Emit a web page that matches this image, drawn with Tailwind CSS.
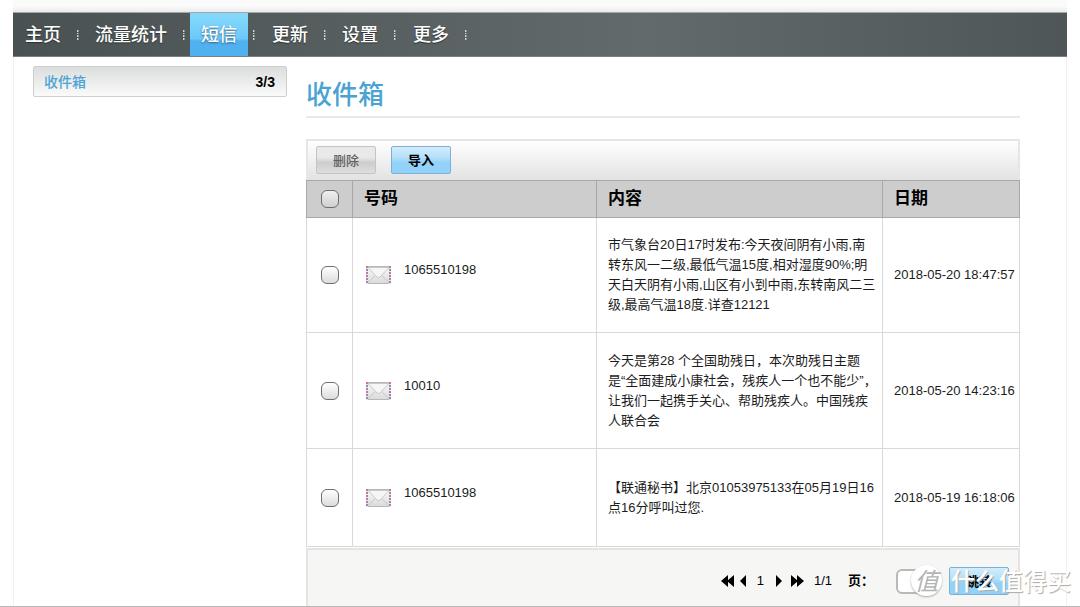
<!DOCTYPE html>
<html lang="zh-CN">
<head>
<meta charset="utf-8">
<meta name="viewport" content="width=device-width, initial-scale=1">
<title>收件箱</title>
<script src="https://cdn.jsdelivr.net/npm/@tailwindcss/browser@4"></script>
</head>
<body class="bg-white font-['Liberation_Sans','Noto_Sans_CJK_SC',sans-serif] text-[13px] leading-5 text-[#1c1c1c]">
<svg class="absolute size-0" aria-hidden="true">
  <defs>
    <linearGradient id="paper" x1="0" y1="0" x2="0" y2="1"><stop offset="0" stop-color="#fafafa"/><stop offset="1" stop-color="#dadada"/></linearGradient>
    <symbol id="mail" viewBox="0 0 25 18">
      <rect x="0.5" y="0.5" width="24" height="17" fill="url(#paper)" stroke="#b8b8b8"/>
      <path d="M2 16.5 9.5 9.500M23 16.5 15.5 9.500" stroke="#c8c8c8" fill="none"/>
      <path d="M2 1.500 11 11Q12.500 12.500 14 11L23 1.500Z" fill="#f6f6f6" stroke="#c8c8c8"/>
      <path d="M1 0V18M24 0V18" stroke="#ece6ee" stroke-width="2"/>
      <path d="M1 0V18M24 0V18" stroke="#d87477" stroke-width="2" stroke-dasharray="2 4"/>
      <path d="M1 3V18M24 3V18" stroke="#7f8fc8" stroke-width="2" stroke-dasharray="2 4"/>
    </symbol>
    <symbol id="dots" viewBox="0 0 2 10"><path d="M0 0h1v2H0zM0 3h1v1H0zM0 5h1v2H0zM0 8h1v2H0z" fill="#d0d4d4"/><path d="M1 0h1v2H1zM1 3h1v1H1zM1 5h1v2H1zM1 8h1v2H1z" fill="#8b9292"/></symbol>
  </defs>
</svg>
<div class="relative flex min-h-screen flex-col overflow-hidden border-b border-[#b8b8b8]">
  <div class="mx-[13px] flex flex-1 flex-col border-x border-[#f1f1f1]">
    <header class="-mx-px">
      <div class="h-3 bg-linear-to-b from-[#fbfbfb] from-50% to-[#ebebeb]"></div>
      <nav class="flex h-[45px] items-center border-y border-t-[#a4a8a8] border-b-[#7b8181] bg-linear-to-r from-[#495152] via-[#626a6b] via-60% to-[#4e5657] pl-px text-lg font-medium text-white text-shadow-[0_1px_1px_#2b3030]">
        <a href="#" class="px-[11px]">主页</a>
        <svg class="mx-[5px] h-[10px] w-[2px]" aria-hidden="true"><use href="#dots"/></svg>
        <a href="#" class="px-[11px]">流量统计</a>
        <svg class="mx-[5px] h-[10px] w-[2px]" aria-hidden="true"><use href="#dots"/></svg>
        <a href="#" aria-current="page" class="flex h-full items-center bg-linear-to-b from-[#82d8fc] from-10% via-[#6cc8f8] via-60% to-[#50b1f0] to-65% px-[11px] text-shadow-[0_1px_2px_#2d5f80]">短信</a>
        <svg class="mr-[6px] ml-[5px] h-[10px] w-[2px]" aria-hidden="true"><use href="#dots"/></svg>
        <a href="#" class="px-[11px]">更新</a>
        <svg class="mx-[5px] h-[10px] w-[2px]" aria-hidden="true"><use href="#dots"/></svg>
        <a href="#" class="px-[11px]">设置</a>
        <svg class="mr-[6px] ml-[5px] h-[10px] w-[2px]" aria-hidden="true"><use href="#dots"/></svg>
        <a href="#" class="px-[11px]">更多</a>
        <svg class="mx-[5px] h-[10px] w-[2px]" aria-hidden="true"><use href="#dots"/></svg>
      </nav>
    </header>
    <div class="flex flex-1">
      <aside class="ml-[19px] w-[254px] shrink-0 pt-[9px]">
        <a href="#" class="flex h-[31px] items-center justify-between rounded-xs border border-[#cfcfcf] bg-linear-to-b from-[#dcdddd] to-[#fafafa] pr-[11px] pl-[10px] text-sm font-medium text-[#4ba5d4]">收件箱 <b class="text-black">3/3</b></a>
      </aside>
      <main class="mr-[46px] ml-[19px] flex flex-1 flex-col">
        <h1 class="border-b-2 border-[#e9e9e9] pt-[18px] pb-px text-[26px] leading-10 font-medium text-[#4aa3d2]">收件箱</h1>
        <div class="mt-[21px] flex h-[41px] items-center gap-[15px] border-2 border-b-0 border-[#e6e6e6] bg-linear-to-b from-white to-[#e2e2e2] pb-[2px] pl-2">
          <button disabled class="h-7 w-[60px] rounded-xs border border-[#c4c4c4] bg-linear-to-b from-[#e9e9e9] from-40% via-[#cdcdcd] via-60% to-[#dedede] pt-[2px] font-medium text-[#606060]">删除</button>
          <button class="h-7 w-[60px] rounded-xs border border-[#7cb0d8] bg-linear-to-b from-[#d4edfb] via-[#b4e0fa] via-40% to-[#92d2f8] to-60% pt-[2px] font-bold text-black">导入</button>
        </div>
        <table class="w-full table-fixed border-separate border-spacing-0 text-left">
          <colgroup><col class="w-[46px]"><col class="w-[244px]"><col class="w-[286px]"><col></colgroup>
          <thead>
            <tr class="h-[38px] bg-[#cdcdcd] text-[17px] text-black">
              <th class="border-y border-l border-[#a8a8a8]"><input type="checkbox" aria-label="全选" class="mx-auto block size-[18px] appearance-none rounded-md border border-[#6e6e6e] bg-linear-to-b from-[#f0f0f0] to-[#cfcfcf]"></th>
              <th class="border-y border-l border-[#a8a8a8] pl-[11px]">号码</th>
              <th class="border-y border-l border-[#a8a8a8] pl-[11px]">内容</th>
              <th class="border border-[#a8a8a8] pl-[11px]">日期</th>
            </tr>
          </thead>
          <tbody>
            <tr class="h-[115px]">
              <td class="border-b border-l border-[#d9d9d9]"><input type="checkbox" aria-label="选择短信 1" class="mx-auto block size-[18px] appearance-none rounded-md border border-[#6e6e6e] bg-linear-to-b from-white to-[#dcdcdc]"></td>
              <td class="border-b border-l border-[#d9d9d9] pl-[13px]"><div class="flex items-center gap-[13px]"><svg class="h-[18px] w-[25px]" aria-hidden="true"><use href="#mail"/></svg><span class="pb-[10px]">1065510198</span></div></td>
              <td class="border-b border-l border-[#d9d9d9] pl-[11px] whitespace-nowrap">市气象台20日17时发布:今天夜间阴有小雨,南<br>转东风一二级,最低气温15度,相对湿度90%;明<br>天白天阴有小雨,山区有小到中雨,东转南风二三<br>级,最高气温18度.详查12121</td>
              <td class="border-x border-b border-[#d9d9d9] pl-[11px] whitespace-nowrap">2018-05-20 18:47:57</td>
            </tr>
            <tr class="h-[116px]">
              <td class="border-b border-l border-[#d9d9d9]"><input type="checkbox" aria-label="选择短信 2" class="mx-auto block size-[18px] appearance-none rounded-md border border-[#6e6e6e] bg-linear-to-b from-white to-[#dcdcdc]"></td>
              <td class="border-b border-l border-[#d9d9d9] pl-[13px]"><div class="flex items-center gap-[13px]"><svg class="h-[18px] w-[25px]" aria-hidden="true"><use href="#mail"/></svg><span class="pb-[10px]">10010</span></div></td>
              <td class="border-b border-l border-[#d9d9d9] pl-[11px] whitespace-nowrap">今天是第28 个全国助残日，本次助残日主题<br>是“全面建成小康社会，残疾人一个也不能少”，<br>让我们一起携手关心、帮助残疾人。中国残疾<br>人联合会</td>
              <td class="border-x border-b border-[#d9d9d9] pl-[11px] whitespace-nowrap">2018-05-20 14:23:16</td>
            </tr>
            <tr class="h-[98px]">
              <td class="border-b border-l border-[#d9d9d9]"><input type="checkbox" aria-label="选择短信 3" class="mx-auto block size-[18px] appearance-none rounded-md border border-[#6e6e6e] bg-linear-to-b from-white to-[#dcdcdc]"></td>
              <td class="border-b border-l border-[#d9d9d9] pl-[13px]"><div class="flex items-center gap-[13px]"><svg class="h-[18px] w-[25px]" aria-hidden="true"><use href="#mail"/></svg><span class="pb-[10px]">1065510198</span></div></td>
              <td class="border-b border-l border-[#d9d9d9] pl-[11px] whitespace-nowrap">【联通秘书】北京01053975133在05月19日16<br>点16分呼叫过您.</td>
              <td class="border-x border-b border-[#d9d9d9] pl-[11px] whitespace-nowrap">2018-05-19 16:18:06</td>
            </tr>
          </tbody>
        </table>
        <form class="mt-px flex flex-1 items-center justify-end border-2 border-b-0 border-[#e4e4e4] bg-[#f6f6f5] pt-[6px] pr-[9px] text-black">
          <button type="button" aria-label="首页"><svg class="h-3 w-[13px]" viewBox="0 0 13 12"><path d="M7 0V12L0 6ZM13 0V12L6 6Z"/></svg></button>
          <button type="button" aria-label="上一页" class="ml-[6px]"><svg class="h-3 w-[6px]" viewBox="0 0 6 12"><path d="M6 0V12L0 6Z"/></svg></button>
          <span class="ml-[11px]">1</span>
          <button type="button" aria-label="下一页" class="ml-[12px]"><svg class="h-3 w-[6px]" viewBox="0 0 6 12"><path d="M0 0V12L6 6Z"/></svg></button>
          <button type="button" aria-label="末页" class="ml-[9px]"><svg class="h-3 w-[13px]" viewBox="0 0 13 12"><path d="M0 0V12L7 6ZM6 0V12L13 6Z"/></svg></button>
          <span class="ml-[10px]">1/1</span>
          <label for="page" class="ml-[16px] font-bold">页：</label>
          <input id="page" type="text" class="ml-[22px] h-[25px] w-[42px] rounded-md border-2 border-[#b9b9b9] bg-white px-1">
          <button type="button" class="ml-[11px] h-7 w-[60px] rounded-xs border border-[#7cb0d8] bg-linear-to-b from-[#d4edfb] via-[#b4e0fa] via-40% to-[#92d2f8] to-60% pt-[2px] font-bold">跳转</button>
        </form>
      </main>
    </div>
  </div>
  <div class="pointer-events-none absolute right-[9px] bottom-[10px] flex items-center gap-[9px] font-['Noto_Sans_CJK_SC',sans-serif] text-2xl whitespace-nowrap text-white">
    <span class="flex size-[31px] items-center justify-center rounded-full bg-white text-[#b4b4b4] shadow-[0_1px_2px_#aaa]"><i>值</i></span>
    <span class="font-medium text-shadow-[1px_1px_1px_#aaa]">什么值得买</span>
  </div>
</div>
</body>
</html>
